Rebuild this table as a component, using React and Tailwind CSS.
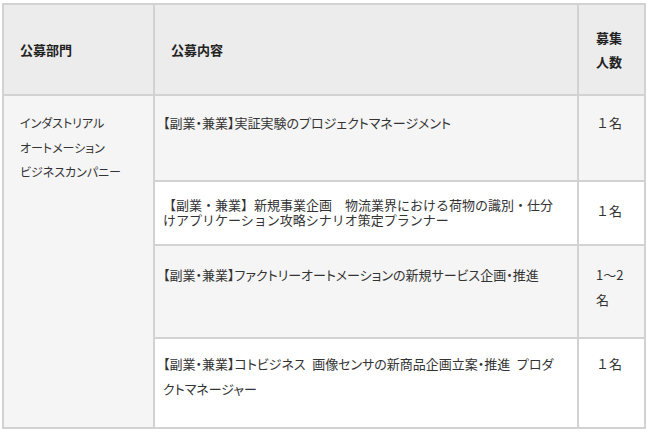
import React from 'react';

const rows = [
  {
    text: '【副業・兼業】実証実験のプロジェクトマネージメント',
    count: '１名',
    bg: 'bg-[#f5f5f5]',
    h: 'h-[86px]',
    pt: 'pt-[15px]',
    cpt: 'pt-[15px]',
  },
  {
    text: '【副業・兼業】新規事業企画　物流業界における荷物の識別・仕分けアプリケーション攻略シナリオ策定プランナー',
    count: '１名',
    bg: 'bg-white',
    h: 'h-[64px]',
    pt: 'pt-[15px]',
    cpt: 'pt-[17px]',
    tight: true,
  },
  {
    text: '【副業・兼業】ファクトリーオートメーションの新規サービス企画・推進',
    count: '1～2名',
    bg: 'bg-[#f5f5f5]',
    h: 'h-[93px]',
    pt: 'pt-[17px]',
    cpt: 'pt-[17px]',
  },
  {
    text: '【副業・兼業】コトビジネス\u2002画像センサの新商品企画立案・推進\u2002プロダクトマネージャー',
    count: '１名',
    bg: 'bg-white',
    h: 'h-[90px]',
    pt: 'pt-[13px]',
    cpt: 'pt-[13px]',
  },
];

export default function App() {
  return (
    <div className="w-[650px] h-[432px] bg-white pt-[3px] pl-[2px] font-['Noto_Sans_CJK_JP','Liberation_Sans',sans-serif] text-[#333]">
      <table className="table-fixed border-collapse w-[642px] border-2 border-[#d2d2d2]">
        <colgroup>
          <col className="w-[151px]" />
          <col className="w-[424px]" />
          <col className="w-[67px]" />
        </colgroup>
        <thead>
          <tr className="bg-[#ececec] h-[91px]">
            <th className="border-2 border-[#d2d2d2] text-left align-middle pl-[16px] text-[13px] leading-[24px] font-bold text-[#222]">
              公募部門
            </th>
            <th className="border-2 border-[#d2d2d2] text-left align-middle pl-[16px] text-[13px] leading-[24px] font-bold text-[#222]">
              公募内容
            </th>
            <th className="border-2 border-[#d2d2d2] text-left align-middle px-[17px] text-[13px] leading-[24px] font-bold text-[#222]">
              募集人数
            </th>
          </tr>
        </thead>
        <tbody>
          {rows.map((r, i) => (
            <tr key={i} className={r.h}>
              {i === 0 && (
                <td
                  rowSpan={rows.length}
                  className="border-2 border-[#d2d2d2] bg-[#f5f5f5] align-top pl-[16px] pt-[15px] text-[12px] leading-[24.5px] [font-feature-settings:'palt']"
                >
                  インダストリアル
                  <br />
                  オートメーション
                  <br />
                  ビジネスカンパニー
                </td>
              )}
              <td
                className={`border-2 border-[#d2d2d2] ${r.bg} align-top pl-[8px] pr-[22px] ${r.pt} text-[13px] ${
                  r.tight ? 'leading-[15px]' : "leading-[24.5px] [font-feature-settings:'palt']"
                }`}
              >
                {r.text}
              </td>
              <td className={`border-2 border-[#d2d2d2] ${r.bg} align-top px-[17px] ${r.cpt} text-[13px] leading-[24.5px]`}>
                {r.count}
              </td>
            </tr>
          ))}
        </tbody>
      </table>
    </div>
  );
}
